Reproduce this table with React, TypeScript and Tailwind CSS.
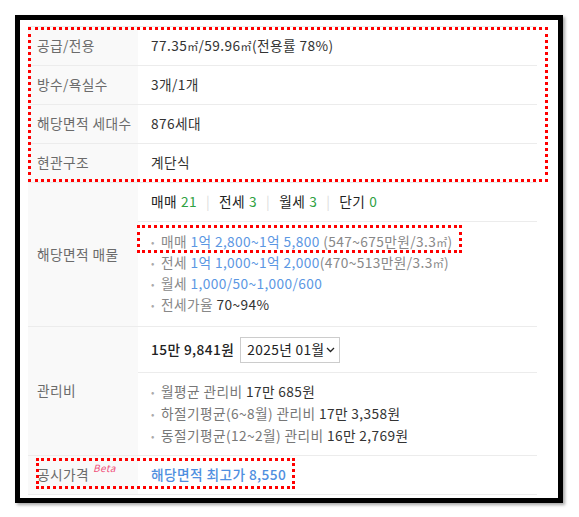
import type { ReactNode } from 'react';

const font = { fontFamily: '"Noto Sans CJK KR", "Noto Sans", sans-serif' };

function Row({ label, children, h }: { label: ReactNode; children: ReactNode; h?: string }) {
  return (
    <div className={`flex border-b border-[#ececec] ${h ?? ''}`}>
      <div className="w-[110px] shrink-0 bg-[#f9f9f9] pl-[9px] flex items-center text-[#6b6b6b]">{label}</div>
      <div className="flex-1 flex flex-col justify-center">{children}</div>
    </div>
  );
}

function Bullet({ children, h = 'h-[21px]' }: { children: ReactNode; h?: string }) {
  return (
    <li className={`flex items-center ${h}`}>
      <span className="w-[10px] text-[#aaa] text-[10px]">•</span>
      <span>{children}</span>
    </li>
  );
}

const Sep = () => <span className="mx-[9px] text-[#ddd]">|</span>;
const M2 = () => <span className="text-[11px]">㎡</span>;

export default function App() {
  return (
    <div className="w-[579px] h-[517px] bg-white p-[15px] text-[13.7px] leading-none tracking-[0.4px]" style={font}>
      <div className="relative w-[548px] h-[488px] border-[5px] border-black bg-white shadow-[2px_2px_3px_rgba(0,0,0,0.35)]">
        <div className="pl-[8px] pt-[6px]">
          <div className="w-[509px] border-t border-[#ececec] text-[#333]">
            <Row label="공급/전용" h="h-[39px]">
              <div className="pl-[13px]">
                77.35<M2 />/59.96<M2 />(전용률 78%)
              </div>
            </Row>
            <Row label="방수/욕실수" h="h-[39px]">
              <div className="pl-[13px]">3개/1개</div>
            </Row>
            <Row label="해당면적 세대수" h="h-[39px]">
              <div className="pl-[13px]">876세대</div>
            </Row>
            <Row label="현관구조" h="h-[39px]">
              <div className="pl-[13px]">계단식</div>
            </Row>

            <Row label="해당면적 매물" h="h-[144px]">
              <div className="h-[39px] shrink-0 flex items-center pl-[13px] border-b border-[#ececec] text-[#222]">
                매매 <span className="ml-[4px] text-[#2fa142]">21</span>
                <Sep />
                전세 <span className="ml-[4px] text-[#2fa142]">3</span>
                <Sep />
                월세 <span className="ml-[4px] text-[#2fa142]">3</span>
                <Sep />
                단기 <span className="ml-[4px] text-[#2fa142]">0</span>
              </div>
              <ul className="flex-1 pl-[13px] pt-[9px] text-[#888]">
                <Bullet>
                  매매 <span className="text-[#5b97e3]">1억 2,800~1억 5,800</span> (547~675만원/3.3<M2 />)
                </Bullet>
                <Bullet>
                  전세 <span className="text-[#5b97e3]">1억 1,000~1억 2,000</span>(470~513만원/3.3<M2 />)
                </Bullet>
                <Bullet>
                  월세 <span className="text-[#5b97e3]">1,000/50~1,000/600</span>
                </Bullet>
                <Bullet>
                  전세가율 <span className="text-[#333]">70~94%</span>
                </Bullet>
              </ul>
            </Row>

            <Row label="관리비" h="h-[129px]">
              <div className="h-[46px] shrink-0 flex items-center pl-[13px] border-b border-[#ececec]">
                <span className="font-medium text-[#222]">15만 9,841원</span>
                <div className="ml-[6px] h-[26px] w-[100px] border border-[#ccc] flex items-center pl-[6px] text-[#222]">
                  2025년 01월
                  <svg width="9" height="6" viewBox="0 0 9 6" className="ml-[1px]">
                    <path d="M1 1 L4.5 4.5 L8 1" fill="none" stroke="#222" strokeWidth="1.3" />
                  </svg>
                </div>
              </div>
              <ul className="flex-1 pl-[13px] pt-[8px] text-[#777]">
                <Bullet h="h-[22px]">
                  월평균 관리비 <span className="text-[#333]">17만 685원</span>
                </Bullet>
                <Bullet h="h-[22px]">
                  하절기평균(6~8월) 관리비 <span className="text-[#333]">17만 3,358원</span>
                </Bullet>
                <Bullet h="h-[22px]">
                  동절기평균(12~2월) 관리비 <span className="text-[#333]">16만 2,769원</span>
                </Bullet>
              </ul>
            </Row>

            <Row
              label={
                <span className="flex items-start">
                  공시가격
                  <span className="ml-[4px] -mt-[5px] text-[10px] italic text-[#f0507a]">Beta</span>
                </span>
              }
              h="h-[39px]"
            >
              <div className="pl-[13px] font-medium text-[#4f8fe0]">해당면적 최고가 8,550</div>
            </Row>
          </div>
        </div>

        <div className="absolute left-[8px] top-[7px] w-[520px] h-[155px] border-[3px] border-dotted border-[#f00]" />
        <div className="absolute left-[117px] top-[205px] w-[325px] h-[28px] border-[3px] border-dotted border-[#f00]" />
        <div className="absolute left-[16px] top-[438px] w-[259px] h-[31px] border-[3px] border-dotted border-[#f00]" />
      </div>
    </div>
  );
}
